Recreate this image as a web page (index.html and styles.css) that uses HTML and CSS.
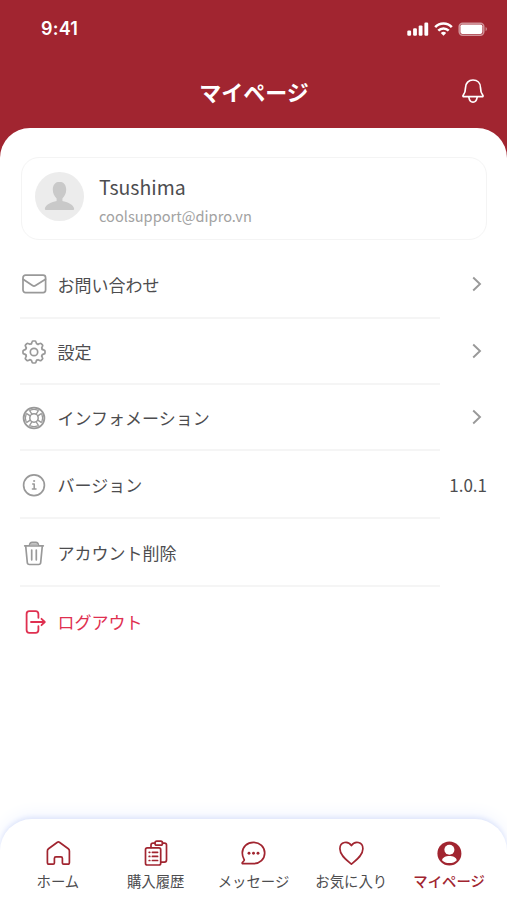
FILE: index.html
```html
<!DOCTYPE html>
<html lang="ja">
<head>
<meta charset="utf-8">
<title>マイページ</title>
<link rel="stylesheet" href="styles.css">
</head>
<body>
<div class="screen">
  <header class="header">
    <div class="status">
      <span class="time">9:41</span>
      <svg class="status-icons" width="84" height="18" viewBox="0 0 84 18" fill="#fff">
        <rect x="1.300" y="10.500" width="3.800" height="5.200" rx="1.200"/>
        <rect x="7.100" y="8.200" width="3.800" height="7.500" rx="1.200"/>
        <rect x="12.700" y="5.400" width="3.800" height="10.300" rx="1.200"/>
        <rect x="18.400" y="2.600" width="3.800" height="13.100" rx="1.200"/>
        <g fill="none" stroke="#fff" stroke-width="2.600">
          <path d="M29.200 7.100c4.600-4.800 12-4.800 16.600 0"/>
          <path d="M32.300 10.700c2.900-2.900 7.500-2.900 10.400 0"/>
        </g>
        <path d="M34.800 12.900c1.600-1.400 3.900-1.400 5.400 0L37.500 15.800z"/>
        <rect x="53.200" y="3.200" width="24.600" height="12" rx="3.400" fill="none" stroke="#fff" stroke-opacity=".5" stroke-width="1.500"/>
        <rect x="54.400" y="4.500" width="22" height="9.400" rx="1.800"/>
        <path d="M79.600 7v4.200c1.700-.7 1.700-3.500 0-4.200z" fill-opacity=".5"/>
      </svg>
    </div>
    <div class="title-bar">
      <h1>マイページ</h1>
      <svg class="bell" width="24" height="26" viewBox="0 0 24 26" fill="none" stroke="#fff" stroke-width="1.700" stroke-linejoin="round" stroke-linecap="round">
        <path d="M4.500 9.700C4.500 4.900 7.700 2 12 2s7.500 2.900 7.500 7.700c0 3.800.5 5.400 2.300 7.500.6.900.2 1.500-.8 1.500H3c-1 0-1.400-.6-.8-1.500 1.800-2.100 2.300-3.700 2.300-7.500z"/>
        <path d="M7.800 19c.5 3.400 2.100 5.200 4.200 5.200s3.700-1.800 4.200-5.200"/>
      </svg>
    </div>
  </header>
  <main class="sheet">
    <section class="profile">
      <svg width="49" height="49" viewBox="0 0 49 49">
        <circle cx="24.500" cy="24.500" r="24.500" fill="#ececec"/>
        <path d="M24.500 9.800c-4 0-6.700 3.100-6.700 8 0 3.700 1.800 6.900 3.800 8.700v2.400c-4.700 1.300-11.500 3-11.800 8.200 0 .5.300.8.800.8h27.800c.5 0 .8-.3.800-.8-.3-5.200-7.100-6.900-11.800-8.200v-2.400c2-1.800 3.800-5 3.800-8.700 0-4.900-2.700-8-6.700-8z" fill="#c9c9c9"/>
      </svg>
      <div>
        <div class="name">Tsushima</div>
        <div class="email">coolsupport@dipro.vn</div>
      </div>
    </section>
    <ul class="menu">
      <li class="row first">
        <svg class="icon" viewBox="0 0 26 26"><rect x="2" y="4.200" width="22.600" height="17.400" rx="2.500"/><path d="M2.100 8.200l9.400 6.300c1 .7 2 .7 3 0l10-6.300"/></svg>
        <span class="label">お問い合わせ</span>
        <svg class="chevron" viewBox="0 0 12 18"><path d="M2.200 2.500L9 9l-6.800 6.500"/></svg>
      </li>
      <li class="row medium">
        <svg class="icon" viewBox="0 0 26 26">
          <defs><path id="tooth" d="M10.400 4.700L11.100 2.800Q11.300 2 12.100 2h1.800q.8 0 1 .8l.7 1.900 1.400.6"/></defs>
          <use href="#tooth"/>
          <use href="#tooth" transform="rotate(45 13 13)"/>
          <use href="#tooth" transform="rotate(90 13 13)"/>
          <use href="#tooth" transform="rotate(135 13 13)"/>
          <use href="#tooth" transform="rotate(180 13 13)"/>
          <use href="#tooth" transform="rotate(225 13 13)"/>
          <use href="#tooth" transform="rotate(270 13 13)"/>
          <use href="#tooth" transform="rotate(315 13 13)"/>
          <circle cx="13" cy="13" r="3.700"/>
        </svg>
        <span class="label">設定</span>
        <svg class="chevron" viewBox="0 0 12 18"><path d="M2.200 2.500L9 9l-6.800 6.500"/></svg>
      </li>
      <li class="row medium">
        <svg class="icon" viewBox="0 0 26 26">
          <defs><path id="segment" d="M10.900 9.200L8.900 6.200Q8.500 5.500 9.300 5.100Q13 3.600 16.700 5.100Q17.500 5.500 17.100 6.200L15.100 9.200"/></defs>
          <circle cx="13" cy="13" r="10.400" stroke-width="1.800"/>
          <circle cx="13" cy="13" r="4.200" stroke-width="1.500"/>
          <g stroke-width="1.300">
            <use href="#segment"/>
            <use href="#segment" transform="rotate(90 13 13)"/>
            <use href="#segment" transform="rotate(180 13 13)"/>
            <use href="#segment" transform="rotate(270 13 13)"/>
          </g>
        </svg>
        <span class="label">インフォメーション</span>
        <svg class="chevron" viewBox="0 0 12 18"><path d="M2.200 2.500L9 9l-6.800 6.500"/></svg>
      </li>
      <li class="row">
        <svg class="icon" viewBox="0 0 26 26"><circle cx="13" cy="13.300" r="10.400"/><path d="M11.700 11.900h1.500v5M11.400 17.100h3.600" stroke-width="1.500"/><circle cx="13" cy="9" r=".6" stroke-width=".9"/></svg>
        <span class="label">バージョン</span>
        <span class="value">1.0.1</span>
      </li>
      <li class="row">
        <svg class="icon" viewBox="0 0 26 26"><path d="M4.700 6L6.300 22.500c.1 1.300.8 2 2.100 2h9.200c1.300 0 2-.7 2.100-2L21.300 6M3.700 5.800h18.600M8.500 5.700c.2-2.300 1.100-3.400 2.700-3.400h3.600c1.600 0 2.500 1.100 2.700 3.400M10.700 10v9.800M15.300 10v9.800"/><path d="M9 5.500c.3-1.500 1.100-2.300 2.500-2.300h3c1.400 0 2.200.8 2.500 2.300z" class="lid"/></svg>
        <span class="label">アカウント削除</span>
      </li>
      <li class="row logout">
        <svg class="icon" viewBox="0 0 26 26"><path d="M17.400 8.800V5c0-1.900-1-2.800-2.800-2.800H8.300C6.500 2.200 5.600 3.100 5.600 5v16c0 1.900.9 2.800 2.700 2.800h6.300c1.800 0 2.800-.9 2.800-2.800v-3.800M10 13h13.200M20.500 9.800l3.300 3.200-3.300 3.200"/></svg>
        <span class="label">ログアウト</span>
      </li>
    </ul>
  </main>
  <nav class="tabs">
    <a class="tab">
      <svg viewBox="0 0 28 28"><path d="M3.400 11.900c0-1 .3-1.600 1.100-2.200l8.900-6.500c.7-.5 1.300-.5 2 0l8.900 6.500c.8.600 1.100 1.200 1.100 2.200v11.600c0 1.100-.6 1.700-1.700 1.700h-4.100c-.8 0-1.200-.4-1.200-1.200v-4.600c0-1-.5-1.500-1.500-1.500h-5c-1 0-1.500.5-1.500 1.500V24c0 .8-.4 1.200-1.200 1.200H5.100c-1.100 0-1.700-.6-1.700-1.700z"/></svg>
      <span>ホーム</span>
    </a>
    <a class="tab">
      <svg viewBox="0 0 28 28"><rect x="3.500" y="8.900" width="15.200" height="17.100" rx="1.800"/><path d="M9 8.500V5.900c0-1.200.7-1.800 2-1.800h2M20.400 4.100h2.100c1.300 0 2 .6 2 1.800v15.200c0 1.300-.7 2-2 2h-3.500"/><rect x="13" y="2.200" width="7.500" height="3.900" rx="1.700"/><path d="M7.200 13.300h.6M10.400 13.300h5.200M7.200 17.400h.6M10.400 17.400h5.200M7.200 21.500h.6M10.400 21.500h5.200"/></svg>
      <span>購入履歴</span>
    </a>
    <a class="tab">
      <svg viewBox="0 0 28 28"><path d="M14.500 3.300c6.300 0 11.200 4.600 11.200 10.700s-4.900 10.700-11.200 10.700H4c-.8 0-1.100-.6-.6-1.200l1.500-1.700c.5-.6.5-1 .1-1.600-1-1.700-1.700-3.700-1.700-6.200 0-6.100 4.900-10.700 11.200-10.700z"/><g class="solid"><circle cx="10" cy="14.300" r="1.450"/><circle cx="14.500" cy="14.300" r="1.450"/><circle cx="19" cy="14.300" r="1.450"/></g></svg>
      <span>メッセージ</span>
    </a>
    <a class="tab">
      <svg viewBox="0 0 28 28"><path d="M14.400 25.100C9.600 21.100 2.900 16.400 2.900 9.700c0-7.300 8.300-8.300 11.500-3.100 3.200-5.200 11.500-4.200 11.500 3.100 0 6.700-6.700 11.400-11.500 15.400z"/></svg>
      <span>お気に入り</span>
    </a>
    <a class="tab active">
      <svg viewBox="0 0 28 28"><circle cx="14.400" cy="14.500" r="12" class="solid"/><g class="cutout"><circle cx="14.400" cy="10.800" r="5"/><path d="M7 21.200c.6-2.800 3.700-4.200 7.400-4.200s6.800 1.400 7.400 4.200c-2 2-4.400 2.800-7.400 2.800S9 23.200 7 21.200z"/></g></svg>
      <span>マイページ</span>
    </a>
  </nav>
</div>
</body>
</html>
```

FILE: styles.css
```css
* {
  box-sizing: border-box;
}

body {
  margin: 0;
  background: #fff;
  color: #4d4d4f;
  font-family: "Noto Sans CJK JP", "Noto Sans", sans-serif;
}

svg {
  display: block;
  flex: none;
}

.screen {
  display: flex;
  flex-direction: column;
  height: 900px;
  overflow: hidden;
}

.header {
  flex: none;
  height: 158px;
  background: #a12530;
  color: #fff;
}

.status {
  display: flex;
  justify-content: space-between;
  align-items: center;
  height: 58px;
  padding: 0 17px 0 41px;
}

.time {
  font: 600 18px/24px Inter, sans-serif;
  letter-spacing: 0.2px;
}

.title-bar {
  display: grid;
  grid-template-columns: 1fr auto 1fr;
  align-items: center;
  height: 66px;
  padding-right: 22px;
  padding-left: 23px;
}

h1 {
  grid-column: 2;
  margin: 0;
  font-size: 22px;
  font-weight: 700;
  line-height: 32px;
}

.bell {
  justify-self: end;
}

.sheet {
  flex: 1;
  margin-top: -30px;
  padding: 29px 20px 0;
  border-radius: 30px 30px 0 0;
  background: #fff;
}

.profile {
  display: flex;
  gap: 15px;
  height: 83px;
  margin-left: 1px;
  padding: 14px 13px 0;
  border: 1.500px solid #f4f4f4;
  border-radius: 18px;
}

.name {
  font-size: 19.500px;
  line-height: 30px;
}

.email {
  margin-top: 2px;
  color: #a2a2a2;
  font-size: 14.600px;
  line-height: 24px;
}

.menu {
  margin: 10px 0 0;
  padding: 0;
  list-style: none;
}

.row {
  display: grid;
  grid-template-columns: 26px 1fr auto;
  align-items: center;
  column-gap: 11px;
  height: 68px;
  padding-left: 1px;
  background: linear-gradient(#f5f5f5, #f5f5f5) left bottom / 420px 2px no-repeat;
}

.row.first {
  height: 69px;
}

.row.medium {
  height: 66px;
}

.row.logout {
  height: 70px;
  background: none;
  color: #df3050;
}

.icon {
  width: 26px;
  height: 26px;
  margin-bottom: 1px;
  fill: none;
  stroke: #999;
  stroke-width: 1.700;
  stroke-linecap: round;
  stroke-linejoin: round;
}

.icon .lid {
  fill: #bbb;
  stroke: none;
}

.logout .icon {
  stroke: #df3050;
  stroke-width: 1.800;
}

.label,
.value {
  font-size: 17px;
  line-height: 24px;
}

.label {
  margin-left: -0.500px;
}

.chevron {
  width: 12px;
  height: 18px;
  margin-right: 4px;
  margin-bottom: 2px;
  fill: none;
  stroke: #999;
  stroke-width: 1.900;
}

.tabs {
  flex: none;
  display: grid;
  grid-template-columns: repeat(5, 1fr);
  height: 81px;
  padding: 20px 9px 0;
  border-radius: 32px 32px 0 0;
  background: #fff;
  box-shadow: 0 -2px 4px #dfe6fb, 0 -4px 18px #f0f4ff;
}

.tab {
  display: flex;
  flex-direction: column;
  align-items: center;
  font-size: 14.400px;
  line-height: 22px;
  white-space: nowrap;
}

.tab svg {
  width: 28px;
  height: 28px;
  margin-bottom: 3px;
  fill: none;
  stroke: #a12530;
  stroke-width: 1.700;
  stroke-linecap: round;
  stroke-linejoin: round;
}

.tab .solid {
  fill: #a12530;
  stroke: none;
}

.tab .cutout {
  fill: #fff;
  stroke: none;
}

.tab.active {
  color: #a12530;
  font-weight: 500;
}
```
